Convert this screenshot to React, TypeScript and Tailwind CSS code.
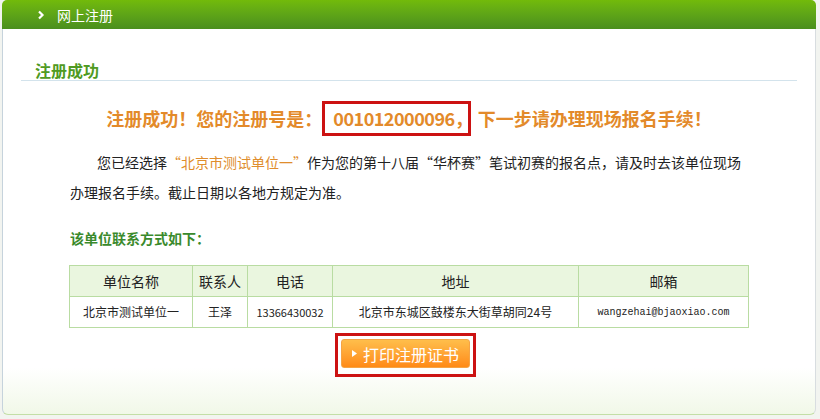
import React from 'react';

const cjk = { fontFamily: '"Noto Sans CJK SC", "Noto Sans", sans-serif' };

export default function App(): JSX.Element {
  const contacts = [
    {
      unit: '北京市测试单位一',
      person: '王泽',
      phone: '13366430032',
      address: '北京市东城区鼓楼东大街草胡同24号',
      email: 'wangzehai@bjaoxiao.com',
    },
  ];

  return (
    <div className="w-[820px] h-[419px] bg-[#f2f4f0] px-[2px] overflow-hidden" style={cjk}>
      <div className="w-[814px]">
        {/* 顶部标题栏 */}
        <div className="h-[29px] rounded-t-[5px] bg-gradient-to-b from-[#72ba0a] to-[#4a8f1d] flex items-center pl-[35px] text-white">
          <svg width="8" height="10" viewBox="0 0 8 10" className="mr-[12px]">
            <path d="M2 1.5 L5.5 5 L2 8.5" fill="none" stroke="white" strokeWidth="2.2" />
          </svg>
          <span className="text-[14px] leading-none">网上注册</span>
        </div>

        {/* 内容区 */}
        <div className="h-[386px] border-l border-r border-b border-l-[#c6d3dc] border-r-[#d8dde0] border-b-[#c3dfa6] rounded-b-[6px] bg-gradient-to-b from-white from-[88%] to-[#f1f8e8] pt-[31px]">
          <div className="mx-[18px] border-b border-[#d3e3ec]">
            <div className="ml-[14px] text-[16px] leading-[20px] font-bold text-[#4f9a22]">注册成功</div>
          </div>

          <div className="mt-[20px] flex justify-center items-center text-[18px] font-bold text-[#e38a2a] h-[35px]">
            <span>注册成功！您的注册号是：</span>
            <span className="h-[35px] border-[3px] border-[#cc1212] flex items-center pl-[8px] pr-0">
              <span className="tracking-[-0.5px]">001012000096</span>
              <span className="mr-[-5px]">，</span>
            </span>
            <span className="ml-[7px]">下一步请办理现场报名手续！</span>
          </div>

          <div className="mt-[11px] pl-[67px] pr-[66px] text-[14px] leading-[30px] text-[#222]">
            <p className="indent-[27px]">
              您已经选择<span className="text-[#e08d2c]">“北京市测试单位一”</span>作为您的第十八届“华杯赛”笔试初赛的报名点，请及时去该单位现场办理报名手续。截止日期以各地方规定为准。
            </p>
          </div>

          <div className="mt-[21px] ml-[67px] text-[14px] leading-[20px] font-bold text-[#3a8a2c]">该单位联系方式如下：</div>

          <table className="mt-[17px] ml-[66px] w-[680px] border-collapse text-[#222] text-center">
            <thead>
              <tr className="bg-[#eaf6df] h-[31px] text-[14px]">
                <th className="w-[123px] border border-[#b9dca2] font-normal">单位名称</th>
                <th className="w-[55px] border border-[#b9dca2] font-normal">联系人</th>
                <th className="w-[85px] border border-[#b9dca2] font-normal">电话</th>
                <th className="w-[246px] border border-[#b9dca2] font-normal">地址</th>
                <th className="w-[170px] border border-[#b9dca2] font-normal">邮箱</th>
              </tr>
            </thead>
            <tbody>
              {contacts.map((c) => (
                <tr key={c.unit} className="h-[31px] text-[12px]">
                  <td className="border border-[#b9dca2]">{c.unit}</td>
                  <td className="border border-[#b9dca2]">{c.person}</td>
                  <td className="border border-[#b9dca2] text-[11px]">{c.phone}</td>
                  <td className="border border-[#b9dca2]">{c.address}</td>
                  <td className="border border-[#b9dca2] text-[10px]" style={{ fontFamily: '"Liberation Mono", monospace' }}>
                    {c.email}
                  </td>
                </tr>
              ))}
            </tbody>
          </table>

          <div className="mt-[5px] flex justify-center">
            <div className="ml-[-7px] w-[141px] h-[44px] border-[3px] border-[#cc1212] p-[3px] pb-[6px]">
              <button className="w-full h-full rounded-[3px] bg-gradient-to-b from-[#ffbe4a] to-[#ff8a14] border border-[#f5a445] flex items-center justify-center text-white text-[16px]">
                <svg width="5" height="7" viewBox="0 0 5 7" className="mr-[6px]">
                  <path d="M0 0 L5 3.5 L0 7 Z" fill="white" />
                </svg>
                打印注册证书
              </button>
            </div>
          </div>
        </div>
      </div>
    </div>
  );
}
